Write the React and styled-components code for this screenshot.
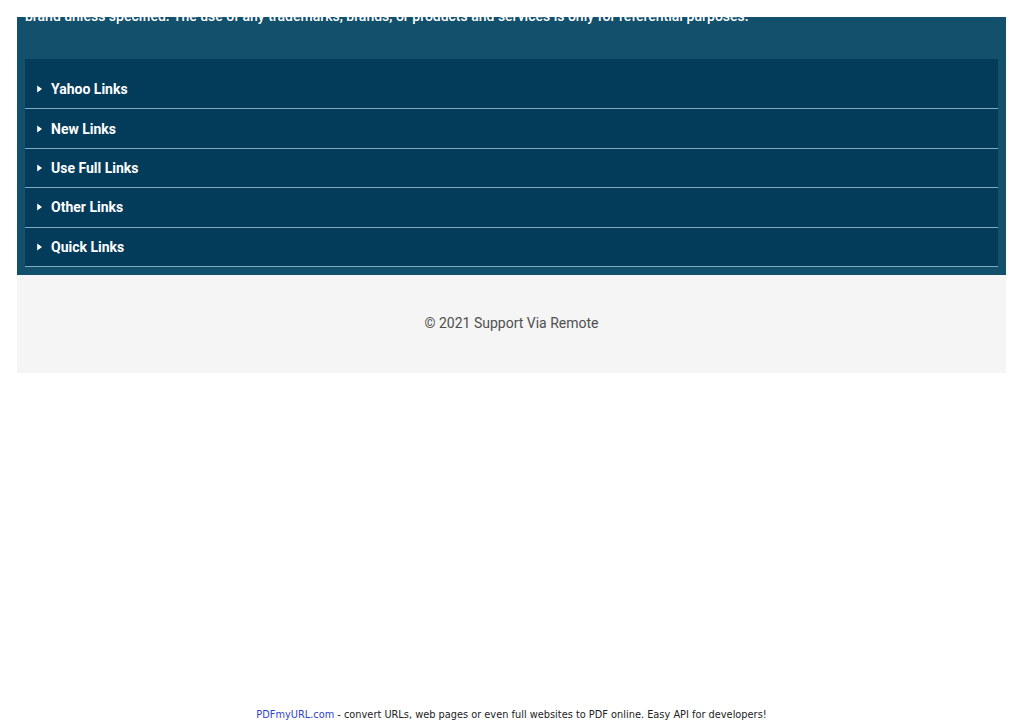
import React from "react";
import styled, { createGlobalStyle } from "styled-components";

const links = ["Yahoo Links", "New Links", "Use Full Links", "Other Links", "Quick Links"];

export default function App() {
  return (
    <>
      <GlobalStyle />
      <Page>
        <Main>
          <Band>
            <Disclaimer>
              brand unless specified. The use of any trademarks, brands, or products and services is only for
              referential purposes.
            </Disclaimer>
            <Accordion>
              {links.map((label) => (
                <Row key={label}>
                  <Caret viewBox="0 0 5 8" aria-hidden="true">
                    <path d="M0.2 0.4 L5 4 L0.2 7.6 Z" fill="#ffffff" />
                  </Caret>
                  <Label>{label}</Label>
                </Row>
              ))}
            </Accordion>
          </Band>
          <Footer>© 2021 Support Via Remote</Footer>
        </Main>
        <Credit>
          <CreditLink>PDFmyURL.com</CreditLink> - convert URLs, web pages or even full websites to PDF online. Easy
          API for developers!
        </Credit>
      </Page>
    </>
  );
}

const GlobalStyle = createGlobalStyle`
  html, body {
    margin: 0;
    padding: 0;
    background: #ffffff;
  }
  body {
    font-family: Roboto, "Liberation Sans", sans-serif;
  }
  * {
    box-sizing: border-box;
  }
`;

const Page = styled.div`
  display: flex;
  flex-direction: column;
  min-height: 723px;
  padding: 17px 18px 0 17px;
`;

const Main = styled.div`
  display: flex;
  flex-direction: column;
`;

const Band = styled.section`
  background-color: #12506c;
  overflow: hidden;
  padding: 0 8px 8px 8px;
`;

const Disclaimer = styled.p`
  margin: -11px 0 33px 0;
  font-size: 14px;
  line-height: 20px;
  font-weight: 500;
  color: #ffffff;
  white-space: nowrap;
`;

const Accordion = styled.div`
  background-color: #033b5a;
  padding-top: 11px;
`;

const Row = styled.div`
  display: flex;
  align-items: center;
  gap: 9px;
  height: 39.4px;
  padding: 0 12px;
  border-bottom: 1.5px solid #86aabd;
  cursor: pointer;
`;

const Caret = styled.svg`
  width: 5px;
  height: 8px;
  flex-shrink: 0;
`;

const Label = styled.span`
  font-size: 14px;
  font-weight: 700;
  color: #ffffff;
  line-height: 18px;
`;

const Footer = styled.footer`
  display: flex;
  align-items: center;
  justify-content: center;
  height: 98px;
  background-color: #f5f5f5;
  color: #4f4f4f;
  font-size: 14px;
  padding-bottom: 1px;
`;

const Credit = styled.div`
  margin-top: auto;
  padding-bottom: 1px;
  text-align: center;
  font-family: "DejaVu Sans", Verdana, sans-serif;
  font-size: 9.8px;
  line-height: 14px;
  color: #222222;
`;

const CreditLink = styled.span`
  color: #2f3fcf;
`;
